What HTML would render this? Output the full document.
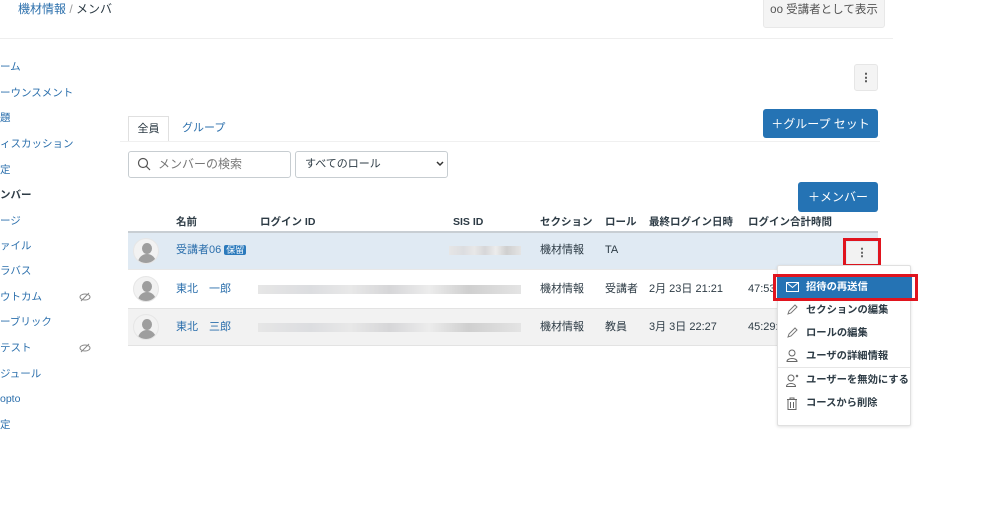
<!DOCTYPE html>
<html><head><meta charset="utf-8">
<style>
*{box-sizing:border-box;margin:0;padding:0}
body{width:1000px;height:506px;overflow:hidden;background:#fff;font-family:"Liberation Sans","Noto Sans CJK JP",sans-serif;font-size:11px;line-height:14px;color:#2d3b45;position:relative}
.a{position:absolute;white-space:nowrap;line-height:14px}
.nav{color:#2b6fac;font-size:10.5px}
.btn{position:absolute;border-radius:3px}
.blue{background:#2573b4;color:#fff;font-size:12px;display:flex;align-items:center;justify-content:center}
.th{font-weight:bold;font-size:10.5px;color:#2d3b45}
.av{position:absolute;width:26px;height:26px;border-radius:50%;background:#f2f2f2;overflow:hidden;border:1px solid #e6e6e6}
.av:before{content:"";position:absolute;left:8px;top:4px;width:10px;height:11px;border-radius:50%;background:#9e9e9e}
.av:after{content:"";position:absolute;left:4px;top:15px;width:18px;height:14px;border-radius:9px 9px 0 0;background:#9e9e9e}
.blur{position:absolute;height:9px;background:linear-gradient(90deg,#e6e6e6,#dcdde0 20%,#e8e8e8 35%,#d6d6d8 50%,#ececec 65%,#cfcfcf 80%,#e4e4e4);}
.mi{position:absolute;left:806px;font-size:10.3px;font-weight:bold;color:#2d3b45;line-height:14px;white-space:nowrap}
.ic{position:absolute;left:786px}
</style></head><body>
<div class="a" style="left:18px;top:2px;color:#2b6fac;font-size:12px">機材情報 <span style="color:#999">/</span> <span style="color:#2d3b45">メンバ</span></div>
<div class="btn" style="left:763px;top:-6px;width:122px;height:34px;background:#f4f4f4;border:1px solid #e8e8e8;font-size:11.5px;color:#555;text-align:center;line-height:30px">oo 受講者として表示</div>
<div class="a" style="left:0;top:38px;width:893px;height:1px;background:#eee"></div>

<div class="a nav" style="left:0;top:60px">ーム</div>
<div class="a nav" style="left:0;top:86px">ーウンスメント</div>
<div class="a nav" style="left:0;top:111px">題</div>
<div class="a nav" style="left:0;top:137px">ィスカッション</div>
<div class="a nav" style="left:0;top:163px">定</div>
<div class="a nav" style="left:0;top:188px;color:#2d3b45;font-weight:bold">ンバー</div>
<div class="a nav" style="left:0;top:214px">ージ</div>
<div class="a nav" style="left:0;top:239px">ァイル</div>
<div class="a nav" style="left:0;top:264px">ラバス</div>
<div class="a nav" style="left:0;top:290px">ウトカム</div>
<div class="a nav" style="left:0;top:315px">ーブリック</div>
<div class="a nav" style="left:0;top:341px">テスト</div>
<div class="a nav" style="left:0;top:367px">ジュール</div>
<div class="a nav" style="left:0;top:392px">opto</div>
<div class="a nav" style="left:0;top:418px">定</div>
<svg class="a" style="left:79px;top:292px" width="12" height="10" viewBox="0 0 12 10"><ellipse cx="6" cy="5" rx="5" ry="3" fill="none" stroke="#888"/><line x1="2" y1="9" x2="10" y2="1" stroke="#888"/></svg>
<svg class="a" style="left:79px;top:343px" width="12" height="10" viewBox="0 0 12 10"><ellipse cx="6" cy="5" rx="5" ry="3" fill="none" stroke="#888"/><line x1="2" y1="9" x2="10" y2="1" stroke="#888"/></svg>

<div class="btn" style="left:854px;top:64px;width:24px;height:27px;background:#f4f4f4;border:1px solid #e6e6e6;text-align:center;line-height:26px;font-weight:bold;color:#333">⋮</div>

<div class="a" style="left:128px;top:116px;width:41px;height:26px;border:1px solid #e0e0e0;border-bottom:none;background:#fff;text-align:center;line-height:24px;font-size:11px">全員</div>
<div class="a" style="left:182px;top:121px;color:#2b6fac;font-size:11px">グループ</div>
<div class="a" style="left:120px;top:141px;width:760px;height:1px;background:#f0f0f0"></div>
<div class="btn blue" style="left:763px;top:109px;width:115px;height:29px">＋グループ セット</div>

<div class="a" style="left:128px;top:151px;width:163px;height:27px;border:1px solid #c7cdd1;border-radius:3px"></div>
<svg class="a" style="left:137px;top:157px" width="14" height="14" viewBox="0 0 14 14"><circle cx="6" cy="6" r="4.5" fill="none" stroke="#555" stroke-width="1.2"/><line x1="9.3" y1="9.3" x2="13" y2="13" stroke="#555" stroke-width="1.2"/></svg>
<div class="a" style="left:158px;top:157px;color:#777;font-size:12px">メンバーの検索</div>
<div class="a" style="left:295px;top:151px;width:153px;height:27px;border:1px solid #c7cdd1;border-radius:3px"></div>
<div class="a" style="left:305px;top:157px;font-size:11px">すべてのロール</div>
<svg class="a" style="left:436px;top:161px" width="8" height="6" viewBox="0 0 8 6"><path d="M1 1l3 3 3-3" fill="none" stroke="#333" stroke-width="1.5"/></svg>

<div class="btn blue" style="left:798px;top:182px;width:80px;height:30px">＋メンバー</div>

<div class="a th" style="left:176px;top:215px">名前</div>
<div class="a th" style="left:260px;top:215px">ログイン ID</div>
<div class="a th" style="left:453px;top:215px">SIS ID</div>
<div class="a th" style="left:540px;top:215px">セクション</div>
<div class="a th" style="left:605px;top:215px">ロール</div>
<div class="a th" style="left:649px;top:215px">最終ログイン日時</div>
<div class="a th" style="left:748px;top:215px">ログイン合計時間</div>
<div class="a" style="left:128px;top:231px;width:750px;height:2px;background:#c8ced3"></div>

<div class="a" style="left:128px;top:233px;width:750px;height:36px;background:#e0eaf3"></div>
<div class="a" style="left:128px;top:269px;width:750px;height:1px;background:#e8e8e8"></div>
<div class="a" style="left:128px;top:308px;width:750px;height:38px;background:#f2f2f2;border-top:1px solid #e3e3e3;border-bottom:1px solid #e3e3e3"></div>

<div class="av" style="left:133px;top:238px"></div>
<div class="av" style="left:133px;top:276px"></div>
<div class="av" style="left:133px;top:314px"></div>

<div class="a" style="left:176px;top:243px;color:#2b6fac">受講者06 <span style="background:#2b7abc;color:#fff;font-size:9px;padding:0 2px;border-radius:2px">保留</span></div>
<div class="a" style="left:176px;top:282px;color:#2b6fac">東北　一郎</div>
<div class="a" style="left:176px;top:320px;color:#2b6fac">東北　三郎</div>

<div class="blur" style="left:449px;top:246px;width:72px"></div>
<div class="blur" style="left:258px;top:285px;width:263px"></div>
<div class="blur" style="left:258px;top:323px;width:263px"></div>

<div class="a" style="left:540px;top:243px">機材情報</div>
<div class="a" style="left:540px;top:282px">機材情報</div>
<div class="a" style="left:540px;top:320px">機材情報</div>
<div class="a" style="left:605px;top:243px">TA</div>
<div class="a" style="left:605px;top:282px">受講者</div>
<div class="a" style="left:605px;top:320px">教員</div>
<div class="a" style="left:649px;top:282px">2月 23日 21:21</div>
<div class="a" style="left:649px;top:320px">3月 3日 22:27</div>
<div class="a" style="left:748px;top:282px">47:53</div>
<div class="a" style="left:748px;top:320px">45:29:</div>

<div class="a" style="left:843px;top:238px;width:38px;height:29px;border:3px solid #e0141e"></div>
<div class="a" style="left:847px;top:242px;width:30px;height:22px;background:#f2f2f2;text-align:center;line-height:22px;font-weight:bold;color:#444">⋮</div>

<div class="a" style="left:777px;top:265px;width:134px;height:161px;background:#fff;border:1px solid #e0e0e0;border-radius:2px;box-shadow:0 1px 3px rgba(0,0,0,.12)"></div>
<div class="a" style="left:773px;top:274px;width:145px;height:27px;border:3px solid #e0141e"></div>
<div class="a" style="left:777px;top:277px;width:135px;height:21px;background:#2573b4"></div>
<svg class="ic" style="top:282px" width="13" height="10" viewBox="0 0 13 10"><rect x=".5" y=".5" width="12" height="9" fill="none" stroke="#fff"/><path d="M.5 .5L6.5 5.5 12.5 .5" fill="none" stroke="#fff"/></svg>
<div class="mi" style="top:281px;color:#fff">招待の再送信</div>
<svg class="ic" style="top:304px" width="12" height="12" viewBox="0 0 12 12"><path d="M2 10l1-3 6-6 2 2-6 6z" fill="none" stroke="#777"/></svg>
<div class="mi" style="top:304px">セクションの編集</div>
<svg class="ic" style="top:327px" width="12" height="12" viewBox="0 0 12 12"><path d="M2 10l1-3 6-6 2 2-6 6z" fill="none" stroke="#777"/></svg>
<div class="mi" style="top:327px">ロールの編集</div>
<svg class="ic" style="top:349px" width="12" height="13" viewBox="0 0 12 13"><circle cx="6" cy="4" r="3" fill="none" stroke="#666"/><path d="M1 12.5c0-4 10-4 10 0z" fill="none" stroke="#666"/></svg>
<div class="mi" style="top:350px">ユーザの詳細情報</div>
<div class="a" style="left:778px;top:367px;width:132px;height:1px;background:#e6e6e6"></div>
<svg class="ic" style="top:374px" width="13" height="13" viewBox="0 0 13 13"><circle cx="5" cy="4" r="3" fill="none" stroke="#666"/><path d="M0.5 12.5c0-4 9-4 9 0z" fill="none" stroke="#666"/><path d="M10 1l2 2M12 1l-2 2" stroke="#666"/></svg>
<div class="mi" style="top:374px">ユーザーを無効にする</div>
<svg class="ic" style="top:397px" width="12" height="13" viewBox="0 0 12 13"><path d="M1 2.5h10M4 2.5V1h4v1.5M2 3v9.5h8V3M4.5 5v6M7.5 5v6" fill="none" stroke="#666"/></svg>
<div class="mi" style="top:397px">コースから削除</div>
</body></html>
